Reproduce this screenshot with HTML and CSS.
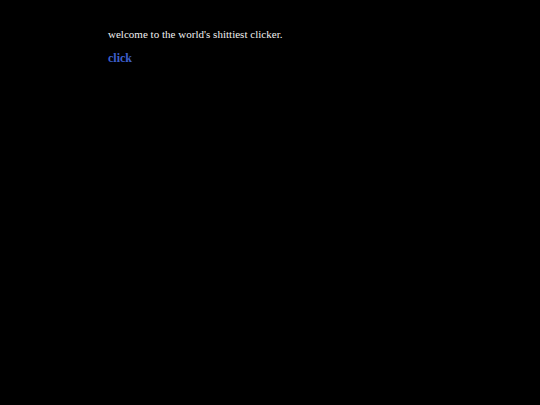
FILE: index.html
```html
<!DOCTYPE html>
<html>
<head>
<meta charset="utf-8">
<link rel="stylesheet" href="styles.css">
</head>
<body>
<div class="main">
<p class="welcome">welcome to the world's shittiest clicker.</p>
<a class="click" href="#">click</a>
</div>
</body>
</html>
```
FILE: styles.css
```css
html, body { margin: 0; padding: 0; background: #000; }
body { height: 405px; }
.main { padding: 28px 0 0 108px; font-family: "Liberation Serif", serif; font-size: 11px; color: #f0f0f0; }
.welcome { margin: 0 0 10px 0; line-height: 13px; letter-spacing: 0.02px; }
.click { color: #3d5fcc; font-weight: bold; text-decoration: none; font-size: 12px; }
```
